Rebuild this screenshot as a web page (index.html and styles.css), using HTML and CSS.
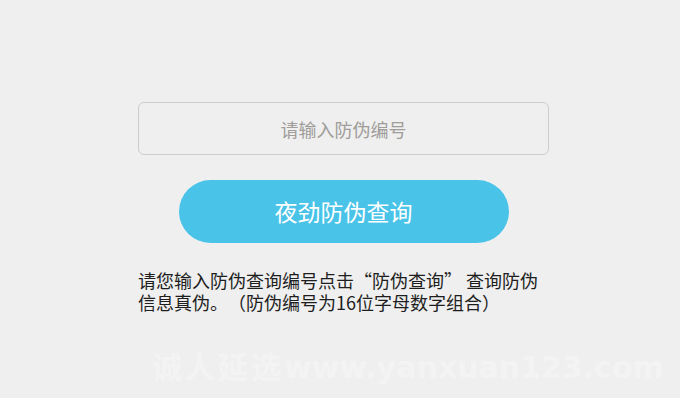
FILE: index.html
```html
<!DOCTYPE html>
<html lang="zh-CN">
<head>
<meta charset="utf-8">
<title>防伪查询</title>
<link rel="stylesheet" href="styles.css">
</head>
<body>
<div class="wrap">
  <div class="field">请输入防伪编号</div>
  <button class="btn" type="button">夜劲防伪查询</button>
  <p class="desc">请您输入防伪查询编号点击“防伪查询” 查询防伪信息真伪。（防伪编号为16位字母数字组合）</p>
</div>
<div class="watermark"><span class="wm-cn">诚人延选</span><span class="wm-en">www.yanxuan123.com</span></div>
</body>
</html>
```

FILE: styles.css
```css
html, body {
  margin: 0;
  padding: 0;
  background: #efefef;
  height: 100%;
  overflow: hidden;
}
body {
  font-family: "Noto Sans CJK SC", "Noto Sans", sans-serif;
  position: relative;
  text-spacing-trim: space-all;
}
.wrap {
  width: 411px;
  margin-left: 138px;
  padding-top: 102px;
  display: flex;
  flex-direction: column;
}
.field {
  box-sizing: border-box;
  height: 53px;
  border: 1px solid #cdcdcd;
  border-radius: 6px;
  background: #efefef;
  display: flex;
  align-items: center;
  justify-content: center;
  font-size: 18px;
  color: #a09d9b;
}
.btn {
  align-self: center;
  margin-top: 25px;
  width: 330px;
  height: 63px;
  border: none;
  border-radius: 32px;
  background: #49c3e8;
  color: #ffffff;
  font-family: "Noto Sans CJK SC", sans-serif;
  font-size: 23px;
  padding: 0 0 2px;
}
.desc {
  margin: 26px 0 0;
  font-size: 18px;
  line-height: 22px;
  color: #1e1e1e;
  text-spacing-trim: space-all;
}
.watermark {
  position: absolute;
  left: 152px;
  top: 343px;
  color: rgba(255, 255, 255, 0.3);
  font-weight: bold;
  white-space: nowrap;
  display: flex;
  align-items: baseline;
}
.wm-cn {
  font-family: "Noto Sans CJK SC", sans-serif;
  font-size: 30px;
  letter-spacing: 3px;
}
.wm-en {
  font-family: "DejaVu Sans", sans-serif;
  font-size: 30px;
  letter-spacing: 0px;
}
```
